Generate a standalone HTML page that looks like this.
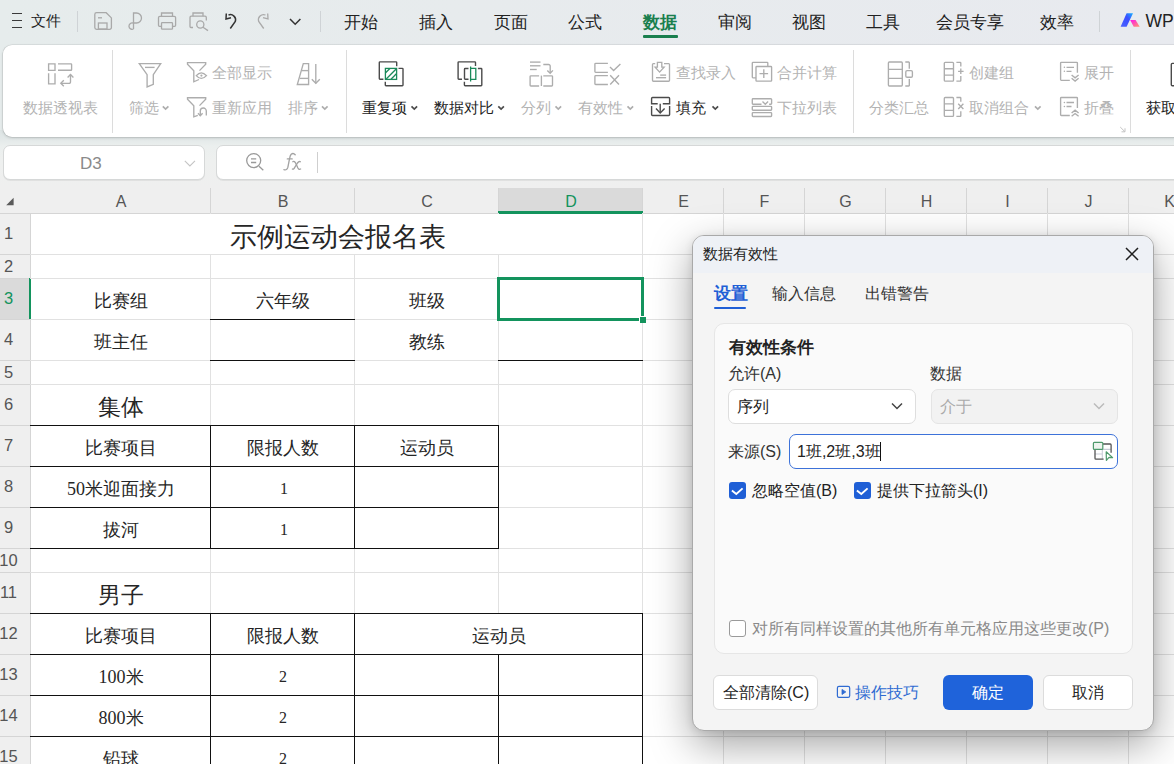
<!DOCTYPE html><html><head><meta charset="utf-8"><style>
*{box-sizing:border-box}
html,body{margin:0;padding:0}
body{width:1174px;height:764px;overflow:hidden;position:relative;background:#e7ebec;font-family:"Liberation Sans",sans-serif;color:#222}
.a{position:absolute}
.t{position:absolute;white-space:nowrap;line-height:1}
.ser{font-family:"Liberation Serif",serif;color:#262626}
svg{position:absolute;overflow:visible}
</style></head><body>
<div class="a" style="left:0;top:0;width:1174px;height:130px;background:linear-gradient(90deg,#e6ecec 0%,#e7ebed 40%,#e8eaef 100%)"></div>
<div class="a" style="left:0;top:130px;width:1174px;height:58px;background:linear-gradient(#dde4e4 0px,#e2e8e8 8px,#ebefee 16px,#eef0ef 30px,#efefef 58px)"></div>
<div class="a" style="left:12px;top:13px;width:10px;height:1.3px;background:#3a3a3a"></div>
<div class="a" style="left:12px;top:20px;width:10px;height:1.3px;background:#3a3a3a"></div>
<div class="a" style="left:12px;top:26.5px;width:10px;height:1.3px;background:#3a3a3a"></div>
<div class="t" style="left:31px;top:13px;font-size:15px;color:#222">文件</div>
<div class="a" style="left:77px;top:11px;width:1px;height:21px;background:#cfd3d6"></div>
<div class="a" style="left:320px;top:11px;width:1px;height:21px;background:#cfd3d6"></div>
<div class="a" style="left:1099px;top:11px;width:1px;height:21px;background:#cfd3d6"></div>
<div class="t" style="left:344px;top:14px;font-size:17px;color:#222;font-weight:normal">开始</div>
<div class="t" style="left:419px;top:14px;font-size:17px;color:#222;font-weight:normal">插入</div>
<div class="t" style="left:494px;top:14px;font-size:17px;color:#222;font-weight:normal">页面</div>
<div class="t" style="left:568px;top:14px;font-size:17px;color:#222;font-weight:normal">公式</div>
<div class="t" style="left:643px;top:14px;font-size:17px;color:#1a7f4e;font-weight:bold">数据</div>
<div class="t" style="left:718px;top:14px;font-size:17px;color:#222;font-weight:normal">审阅</div>
<div class="t" style="left:792px;top:14px;font-size:17px;color:#222;font-weight:normal">视图</div>
<div class="t" style="left:866px;top:14px;font-size:17px;color:#222;font-weight:normal">工具</div>
<div class="t" style="left:936px;top:14px;font-size:17px;color:#222;font-weight:normal">会员专享</div>
<div class="t" style="left:1040px;top:14px;font-size:17px;color:#222;font-weight:normal">效率</div>
<div class="a" style="left:643px;top:35px;width:35px;height:2.5px;background:#1a7f4e;border-radius:1px"></div>
<div class="t" style="left:1145.5px;top:13px;font-size:17.5px;color:#222;letter-spacing:0px">WPS</div>
<div class="a" style="left:3px;top:44.5px;width:1250px;height:92px;background:#fff;border-radius:9px;box-shadow:0 0 0 0.6px rgba(0,0,0,.10),0 1px 3px rgba(0,0,0,.16)"></div>
<div class="a" style="left:112px;top:50px;width:1px;height:83px;background:#dcdcdc"></div>
<div class="a" style="left:346px;top:50px;width:1px;height:83px;background:#dcdcdc"></div>
<div class="a" style="left:853px;top:50px;width:1px;height:83px;background:#dcdcdc"></div>
<div class="a" style="left:1130px;top:50px;width:1px;height:83px;background:#dcdcdc"></div>
<div class="t" style="left:23px;top:99.8px;font-size:15px;color:#b3b3b3">数据透视表</div>
<div class="t" style="left:129px;top:99.8px;font-size:15px;color:#b3b3b3">筛选</div>
<div class="t" style="left:212px;top:64.8px;font-size:15px;color:#b3b3b3">全部显示</div>
<div class="t" style="left:212px;top:99.8px;font-size:15px;color:#b3b3b3">重新应用</div>
<div class="t" style="left:288px;top:99.8px;font-size:15px;color:#b3b3b3">排序</div>
<div class="t" style="left:362px;top:99.8px;font-size:15px;color:#222">重复项</div>
<div class="t" style="left:434px;top:99.8px;font-size:15px;color:#222">数据对比</div>
<div class="t" style="left:521px;top:99.8px;font-size:15px;color:#b3b3b3">分列</div>
<div class="t" style="left:578px;top:99.8px;font-size:15px;color:#b3b3b3">有效性</div>
<div class="t" style="left:676px;top:64.8px;font-size:15px;color:#b3b3b3">查找录入</div>
<div class="t" style="left:676px;top:99.8px;font-size:15px;color:#222">填充</div>
<div class="t" style="left:777px;top:64.8px;font-size:15px;color:#b3b3b3">合并计算</div>
<div class="t" style="left:777px;top:99.8px;font-size:15px;color:#b3b3b3">下拉列表</div>
<div class="t" style="left:869px;top:99.8px;font-size:15px;color:#b3b3b3">分类汇总</div>
<div class="t" style="left:969px;top:64.8px;font-size:15px;color:#b3b3b3">创建组</div>
<div class="t" style="left:969px;top:99.8px;font-size:15px;color:#b3b3b3">取消组合</div>
<div class="t" style="left:1084px;top:64.8px;font-size:15px;color:#b3b3b3">展开</div>
<div class="t" style="left:1084px;top:99.8px;font-size:15px;color:#b3b3b3">折叠</div>
<div class="t" style="left:1146px;top:99.8px;font-size:15px;color:#222">获取</div>
<div class="a" style="left:3px;top:145px;width:202px;height:35px;background:#fff;border:1px solid #d6d8d8;border-radius:7px;box-shadow:0 1px 0 rgba(0,0,0,.06)"></div>
<div class="a" style="left:216px;top:145px;width:1000px;height:35px;background:#fff;border:1px solid #d6d8d8;border-radius:7px;box-shadow:0 1px 0 rgba(0,0,0,.06)"></div>
<div class="t" style="left:80px;top:155.2px;font-size:17px;color:#8a8a8a">D3</div>
<svg style="left:0;top:0" width="1174" height="764"><g fill="none" stroke="#a3a3a3" stroke-width="1.35" stroke-linecap="round"><path d="M295.2 154.8 Q293.3 152.6 291.2 154.3 Q290.1 155.4 289.6 158.5 L287.9 167.2 Q287 170.6 283.9 169.6"/><path d="M287.3 158.9 H292.2"/><path d="M292.9 161.7 Q294.6 160.8 295.6 163 L297.9 168 Q298.9 170 300.6 169"/><path d="M300.4 161.7 Q299 160.8 297.5 163 L294.6 167.6 Q293.6 169.8 292.4 169"/></g></svg>
<div class="a" style="left:317px;top:152px;width:1px;height:21px;background:#cfcfcf"></div>
<svg style="left:0;top:0" width="1174" height="764" viewBox="0 0 1174 764"><path d="M94.8 14.5 a1.8 1.8 0 0 1 1.8-1.8 h9.6 l5.2 5.2 v9.6 a1.8 1.8 0 0 1 -1.8 1.8 h-13 a1.8 1.8 0 0 1 -1.8-1.8z" fill="none" stroke="#a9a9a9" stroke-width="1.3"/><path d="M98 17.8h4" stroke="#a9a9a9" stroke-width="1.3"/><rect x="98.4" y="23" width="8.6" height="6" fill="none" stroke="#a9a9a9" stroke-width="1.3"/><path d="M133.5 29 V13 h3 a5 5 0 0 1 0 10 h-3.5 a3.2 3.2 0 1 0 0.5 6" fill="none" stroke="#a9a9a9" stroke-width="1.3"/><path d="M161.5 16.3 V13 h11 v3.3" fill="none" stroke="#a9a9a9" stroke-width="1.3"/><path d="M161.5 26.3 h-2 a1 1 0 0 1 -1-1 v-7.6 a1.4 1.4 0 0 1 1.4-1.4 h14.3 a1.4 1.4 0 0 1 1.4 1.4 v7.6 a1 1 0 0 1 -1 1 h-2" fill="none" stroke="#a9a9a9" stroke-width="1.3"/><rect x="161.5" y="22.6" width="11" height="6.6" rx="0.8" fill="none" stroke="#a9a9a9" stroke-width="1.3"/><path d="M193 16.3 V13 h10 v3.3" fill="none" stroke="#a9a9a9" stroke-width="1.3"/><path d="M193 27.5 h-2 a1 1 0 0 1 -1-1 v-9 a1.3 1.3 0 0 1 1.3-1.3 h13.7 a1.3 1.3 0 0 1 1.3 1.3 v3" fill="none" stroke="#a9a9a9" stroke-width="1.3"/><circle cx="200.3" cy="24.5" r="3.6" fill="none" stroke="#a9a9a9" stroke-width="1.3"/><path d="M203 27.2 l5 3.4" stroke="#a9a9a9" stroke-width="1.3"/><path d="M228.5 15 a5.2 5.2 0 0 1 6.8 6.5 l-5 7" fill="none" stroke="#333" stroke-width="1.5"/><path d="M226.3 13.5 l-0.3 5.5 l5 -1.3" fill="none" stroke="#333" stroke-width="1.5"/><path d="M265.5 15 a5.2 5.2 0 0 0 -6.8 6.5 l5 7" fill="none" stroke="#aaa" stroke-width="1.3"/><path d="M267.7 13.5 l0.3 5.5 l-5 -1.3" fill="none" stroke="#aaa" stroke-width="1.3"/><path d="M290 19 l5.2 5.3 l5.2 -5.3" fill="none" stroke="#333" stroke-width="1.5"/><defs><linearGradient id="gb" x1="0" y1="1" x2="1" y2="0"><stop offset="0" stop-color="#4a63ff"/><stop offset="0.6" stop-color="#3b4dff"/><stop offset="1" stop-color="#17b4ff"/></linearGradient><linearGradient id="gp" x1="0" y1="0" x2="1" y2="1"><stop offset="0" stop-color="#ff10f0"/><stop offset="1" stop-color="#ff9a6a"/></linearGradient></defs><path d="M1120.6 26.7 L1126.6 13.2 H1133 L1126.6 26.7Z" fill="url(#gb)"/><path d="M1130.2 19.9 H1135.6 L1139.7 26.7 H1133.7Z" fill="url(#gp)"/><g fill="none" stroke="#adadad" stroke-width="1.35"><path d="M48.6 63.9 h6.4 v6.4 h-6.4z"/><path d="M58 63.9 h13 a0.6 0.6 0 0 1 .6.6 v5.2 a0.6 0.6 0 0 1 -.6.6 h-13"/><path d="M48.6 73.3 v10.6 h6.4 v-10.6"/><path d="M61 83.3 h8.2 a1.3 1.3 0 0 0 1.3-1.3 v-7.5"/><path d="M63.8 80.3 l-3 3 l3 3"/><path d="M67.6 77.4 l2.9 -2.9 l2.9 2.9"/></g><g fill="none" stroke="#adadad" stroke-width="1.35"><path d="M139.3 63.6 h21.4 l-7.4 11 v9.8 l-6.2 2.5 v-12.3z"/><path d="M145 67.4 h9.6"/></g><g fill="none" stroke="#adadad" stroke-width="1.35"><path d="M199.5 70.6 l6.2 -6.3 v-1.6 h-18.2 v1.6 l6.3 6.5 v11 l5.2 -2.3"/><path d="M196.3 75.6 q4.9 -5.6 10.2 0 q-5.3 5.6 -10.2 0z"/></g><circle cx="201.4" cy="75.6" r="1.1" fill="#adadad"/><g fill="none" stroke="#adadad" stroke-width="1.35"><path d="M199.5 105.6 l6.2 -6.3 v-1.6 h-18.2 v1.6 l6.3 6.5 v11 l4 -1.5"/><path d="M206.3 115.5 v-4.5 a3 3 0 0 0 -6 0 v4.5"/><path d="M198 113.2 l2.3 2.5 l2.3 -2.5"/></g><g fill="none" stroke="#adadad" stroke-width="1.35"><path d="M303.3 63.6 h5.3 v20.9 h-11.3z"/><path d="M301.6 70.6 h7"/><path d="M299.8 78.4 h8.8"/><path d="M315.8 64 v19.5"/><path d="M311.8 79.3 l4 4 l4 -4"/></g><g fill="none" stroke="#4b4b4b" stroke-width="1.4"><path d="M383.4 79.3 h-3.4 a0.7 0.7 0 0 1 -.7-.7 v-16 a0.7 0.7 0 0 1 .7-.7 h16 a0.7 0.7 0 0 1 .7.7 v3.6"/><path d="M398.5 68.4 h3.8 a0.7 0.7 0 0 1 .7.7 v15.9 a0.7 0.7 0 0 1 -.7.7 h-16.3 a0.7 0.7 0 0 1 -.7-.7 v-3.3"/></g><g fill="none" stroke="#1a8a5a" stroke-width="1.3"><rect x="385.4" y="68.4" width="11.2" height="11"/><path d="M385.6 72.8 l4.3 -4.3"/><path d="M386.2 79 l10.2 -10.2"/><path d="M391 79.2 l5.4 -5.4"/></g><g fill="none" stroke="#4b4b4b" stroke-width="1.4"><path d="M462 79.3 h-3.2 a0.7 0.7 0 0 1 -.7-.7 v-16 a0.7 0.7 0 0 1 .7-.7 h16 a0.7 0.7 0 0 1 .7.7 v3.4"/><path d="M477.9 68.5 h3.2 a0.7 0.7 0 0 1 .7.7 v15.8 a0.7 0.7 0 0 1 -.7.7 h-16 a0.7 0.7 0 0 1 -.7-.7 v-3.3"/><path d="M468.5 68.5 h-3.3 a0.7 0.7 0 0 0 -.7.7 v9.4 a0.7 0.7 0 0 0 .7.7 h3.3"/></g><g fill="none" stroke="#1a8a5a" stroke-width="1.3"><path d="M470.6 66.5 v15"/><path d="M470.6 68.3 h5.2 v11.1 h-5.2"/></g><g fill="none" stroke="#adadad" stroke-width="1.35"><path d="M530 62.1 h10.5"/><path d="M530 65.8 h10.5"/><path d="M530 69.5 h6.7"/><path d="M543.3 64.5 h5.3 a1.6 1.6 0 0 1 1.6 1.6 v6.8"/><path d="M547.3 70.4 l2.9 2.9 l2.7 -2.9"/><path d="M539.1 75.8 h-8.2 a0.8 0.8 0 0 0 -.8.8 v8.6 a0.8 0.8 0 0 0 .8.8 h8.2"/><path d="M541.4 75.6 v10.4"/><path d="M543.3 75.8 h8.4 a0.8 0.8 0 0 1 .8.8 v8.6 a0.8 0.8 0 0 1 -.8.8 h-8.4"/></g><g fill="none" stroke="#adadad" stroke-width="1.35"><path d="M607.9 63.3 h-12.2 a0.8 0.8 0 0 0 -.8.8 v7.4 a0.8 0.8 0 0 0 .8.8 h12.2"/><path d="M607.9 75.6 h-12.2 a0.8 0.8 0 0 0 -.8.8 v7.3 a0.8 0.8 0 0 0 .8.8 h12.2"/><path d="M610 67.1 l3.6 3.5 l6.8 -6.6"/><path d="M610.2 75.3 l8.8 9.2 M619 75.3 l-8.8 9.2"/></g><g fill="none" stroke="#adadad" stroke-width="1.35"><path d="M655.2 63.6 h-1.8 a0.9 0.9 0 0 0 -.9.9 v15.8 a0.9 0.9 0 0 0 .9.9 h15.2 a0.9 0.9 0 0 0 .9-.9 v-15.8 a0.9 0.9 0 0 0 -.9-.9 h-4.6"/><path d="M657.4 62.3 v4.8 h-2.3 l4.5 5 l4.5 -5 h-2.3 v-4.8z"/><path d="M660.2 75.1 h5.9"/><path d="M656 77.7 h10.1"/></g><g fill="none" stroke="#4b4b4b" stroke-width="1.4"><path d="M651.6 106 v8.6 a0.9 0.9 0 0 0 .9.9 h16.2 a0.9 0.9 0 0 0 .9-.9 v-8.6"/><path d="M657.7 103.8 h-6.1 v-5.4 a0.9 0.9 0 0 1 .9-.9 h16.2 a0.9 0.9 0 0 1 .9.9 v5.4 h-6.8"/><path d="M660.2 103.8 v9.2"/><path d="M656 108.6 l4.2 4.4 l4.4 -4.4"/></g><g fill="none" stroke="#adadad" stroke-width="1.35"><path d="M756 77.8 h-3 a0.7 0.7 0 0 1 -.7-.7 v-14.1 a0.7 0.7 0 0 1 .7-.7 h14.1 a0.7 0.7 0 0 1 .7.7 v3.5"/><rect x="756" y="66.5" width="15.6" height="14.6" rx="0.7"/><path d="M763.8 69.3 v8.6 M759.5 73.6 h8.6"/></g><g fill="none" stroke="#adadad" stroke-width="1.35"><path d="M761.5 104.2 h-8.5 a0.7 0.7 0 0 1 -.7-.7 v-4.1 a0.7 0.7 0 0 1 .7-.7 h17.9 a0.7 0.7 0 0 1 .7.7 v4.1 a0.7 0.7 0 0 1 -.7.7 h-1.8"/><path d="M762.5 101.5 l2.8 2.7 l2.8 -2.7"/><rect x="752.3" y="106.3" width="19.3" height="3.9" rx="0.7"/><rect x="752.3" y="112.6" width="19.3" height="3.9" rx="0.7"/></g><g fill="none" stroke="#adadad" stroke-width="1.35"><rect x="888.4" y="62" width="13.9" height="24" rx="0.9"/><path d="M888.4 69.4 h13.9 M888.4 78.4 h13.9"/><path d="M905.3 62 h3.4 a0.6 0.6 0 0 1 .6.6 v6.1"/><path d="M909.3 79.1 v6.3 a0.6 0.6 0 0 1 -.6.6 h-3.4"/><rect x="905.8" y="70.6" width="6.6" height="6.6" rx="1.3"/></g><g fill="none" stroke="#adadad" stroke-width="1.35" transform="translate(0 0)"><rect x="944.3" y="62.3" width="9.2" height="18.8" rx="0.9"/><path d="M944.3 68.7 h9.2 M944.3 75.1 h9.2"/><path d="M956.4 62.3 h3.8 a0.6 0.6 0 0 1 .6.6 v3.6"/><path d="M960.8 76.1 v4.4 a0.6 0.6 0 0 1 -.6.6 h-3.8"/></g><g fill="none" stroke="#adadad" stroke-width="1.35" transform="translate(0 35.2)"><rect x="944.3" y="62.3" width="9.2" height="18.8" rx="0.9"/><path d="M944.3 68.7 h9.2 M944.3 75.1 h9.2"/><path d="M956.4 62.3 h3.8 a0.6 0.6 0 0 1 .6.6 v3.6"/><path d="M960.8 76.1 v4.4 a0.6 0.6 0 0 1 -.6.6 h-3.8"/></g><path d="M958.1 71.3 h5.5 M960.8 68.6 v5.4" fill="none" stroke="#adadad" stroke-width="1.35"/><path d="M958.2 103.7 l5.2 5.2 M963.4 103.7 l-5.2 5.2" fill="none" stroke="#adadad" stroke-width="1.35"/><g fill="none" stroke="#adadad" stroke-width="1.35" transform="translate(0 0)"><path d="M1069.8 80.3 h-8.5 a0.7 0.7 0 0 1 -.7-.7 v-16.6 a0.7 0.7 0 0 1 .7-.7 h15.4 a0.7 0.7 0 0 1 .7.7 v9.8"/><path d="M1066.5 67.3 h7.5 M1066.5 71.3 h5"/></g><g fill="#adadad" transform="translate(0 0)"><circle cx="1064.4" cy="67.3" r="0.8"/><circle cx="1064.4" cy="71.3" r="0.8"/></g><path d="M1071.6 75 l3.5 2.8 l3.5 -2.8 M1071.6 78.3 l3.5 2.8 l3.5 -2.8" fill="none" stroke="#adadad" stroke-width="1.35"/><g fill="none" stroke="#adadad" stroke-width="1.35" transform="translate(0 35.2)"><path d="M1069.8 80.3 h-8.5 a0.7 0.7 0 0 1 -.7-.7 v-16.6 a0.7 0.7 0 0 1 .7-.7 h15.4 a0.7 0.7 0 0 1 .7.7 v9.8"/><path d="M1066.5 67.3 h7.5 M1066.5 71.3 h5"/></g><g fill="#adadad" transform="translate(0 35.2)"><circle cx="1064.4" cy="67.3" r="0.8"/><circle cx="1064.4" cy="71.3" r="0.8"/></g><path d="M1071.6 113 l3.5 -2.8 l3.5 2.8 M1071.6 116.3 l3.5 -2.8 l3.5 2.8" fill="none" stroke="#adadad" stroke-width="1.35"/><path d="M1120.2 127 l4.8 4.8 M1121.5 131.8 h3.5 v-3.5" fill="none" stroke="#c4c4c4" stroke-width="1"/><rect x="1171.3" y="63.4" width="14" height="22.3" rx="1" fill="none" stroke="#4b4b4b" stroke-width="1.4"/><path d="M162.8 106.3 l2.8 2.7 l2.8 -2.7" fill="none" stroke="#adadad" stroke-width="1.7"/><path d="M322 106.3 l2.8 2.7 l2.8 -2.7" fill="none" stroke="#adadad" stroke-width="1.7"/><path d="M411.5 106.3 l2.8 2.7 l2.8 -2.7" fill="none" stroke="#4b4b4b" stroke-width="1.7"/><path d="M498.3 106.3 l2.8 2.7 l2.8 -2.7" fill="none" stroke="#4b4b4b" stroke-width="1.7"/><path d="M555.5 106.3 l2.8 2.7 l2.8 -2.7" fill="none" stroke="#adadad" stroke-width="1.7"/><path d="M627.5 106.3 l2.8 2.7 l2.8 -2.7" fill="none" stroke="#adadad" stroke-width="1.7"/><path d="M712.5 106.3 l2.8 2.7 l2.8 -2.7" fill="none" stroke="#4b4b4b" stroke-width="1.7"/><path d="M1035 106.3 l2.8 2.7 l2.8 -2.7" fill="none" stroke="#adadad" stroke-width="1.7"/><g fill="none" stroke="#9a9a9a" stroke-width="1.3"><circle cx="253.7" cy="160.6" r="7"/><path d="M251 158.9 h5.2 M251 162.5 h5.2"/><path d="M259 166.2 l4.3 4"/></g><path d="M184.8 160.9 l5.1 5.1 l5.1 -5.1" fill="none" stroke="#c4c4c4" stroke-width="1.1"/></svg>
<div class="a" style="left:0;top:188px;width:1174px;height:25px;background:#efefef"></div>
<div class="a" style="left:0;top:213px;width:30px;height:551px;background:#efefef"></div>
<div class="a" style="left:498px;top:188px;width:144px;height:25px;background:#dadada"></div>
<div class="a" style="left:0;top:278px;width:30px;height:41px;background:#dadada"></div>
<div class="a" style="left:30px;top:213px;width:1144px;height:551px;background:#fff"></div>
<svg style="left:0;top:0" width="40" height="220"><path d="M13.6 197.8 V205.2 H6.2Z" fill="#5a5a5a"/></svg>
<div class="a" style="left:210px;top:188px;width:1px;height:25px;background:#d5d5d5"></div>
<div class="a" style="left:354px;top:188px;width:1px;height:25px;background:#d5d5d5"></div>
<div class="a" style="left:498px;top:188px;width:1px;height:25px;background:#d5d5d5"></div>
<div class="a" style="left:642px;top:188px;width:1px;height:25px;background:#d5d5d5"></div>
<div class="a" style="left:723px;top:188px;width:1px;height:25px;background:#d5d5d5"></div>
<div class="a" style="left:804px;top:188px;width:1px;height:25px;background:#d5d5d5"></div>
<div class="a" style="left:885px;top:188px;width:1px;height:25px;background:#d5d5d5"></div>
<div class="a" style="left:966px;top:188px;width:1px;height:25px;background:#d5d5d5"></div>
<div class="a" style="left:1047px;top:188px;width:1px;height:25px;background:#d5d5d5"></div>
<div class="a" style="left:1128px;top:188px;width:1px;height:25px;background:#d5d5d5"></div>
<div class="a" style="left:1209px;top:188px;width:1px;height:25px;background:#d5d5d5"></div>
<div class="a" style="left:0;top:213px;width:1174px;height:1px;background:#d5d5d5"></div>
<div class="a" style="left:30px;top:213px;width:1px;height:551px;background:#d5d5d5"></div>
<div class="t" style="left:101.0px;width:40px;text-align:center;top:194px;font-size:16px;color:#555">A</div>
<div class="t" style="left:263.0px;width:40px;text-align:center;top:194px;font-size:16px;color:#555">B</div>
<div class="t" style="left:407.0px;width:40px;text-align:center;top:194px;font-size:16px;color:#555">C</div>
<div class="t" style="left:551.0px;width:40px;text-align:center;top:194px;font-size:16px;color:#13935d">D</div>
<div class="t" style="left:663.5px;width:40px;text-align:center;top:194px;font-size:16px;color:#555">E</div>
<div class="t" style="left:744.5px;width:40px;text-align:center;top:194px;font-size:16px;color:#555">F</div>
<div class="t" style="left:825.5px;width:40px;text-align:center;top:194px;font-size:16px;color:#555">G</div>
<div class="t" style="left:906.5px;width:40px;text-align:center;top:194px;font-size:16px;color:#555">H</div>
<div class="t" style="left:987.5px;width:40px;text-align:center;top:194px;font-size:16px;color:#555">I</div>
<div class="t" style="left:1068.5px;width:40px;text-align:center;top:194px;font-size:16px;color:#555">J</div>
<div class="t" style="left:1149.5px;width:40px;text-align:center;top:194px;font-size:16px;color:#555">K</div>
<div class="t" style="left:-1.5px;width:20px;text-align:center;top:225.0px;font-size:16.5px;color:#555">1</div>
<div class="a" style="left:0;top:254px;width:30px;height:1px;background:#d5d5d5"></div>
<div class="t" style="left:-1.5px;width:20px;text-align:center;top:257.5px;font-size:16.5px;color:#555">2</div>
<div class="a" style="left:0;top:278px;width:30px;height:1px;background:#d5d5d5"></div>
<div class="t" style="left:-1.5px;width:20px;text-align:center;top:290.0px;font-size:16.5px;color:#13935d">3</div>
<div class="a" style="left:0;top:319px;width:30px;height:1px;background:#d5d5d5"></div>
<div class="t" style="left:-1.5px;width:20px;text-align:center;top:331.0px;font-size:16.5px;color:#555">4</div>
<div class="a" style="left:0;top:360px;width:30px;height:1px;background:#d5d5d5"></div>
<div class="t" style="left:-1.5px;width:20px;text-align:center;top:363.5px;font-size:16.5px;color:#555">5</div>
<div class="a" style="left:0;top:384px;width:30px;height:1px;background:#d5d5d5"></div>
<div class="t" style="left:-1.5px;width:20px;text-align:center;top:396.0px;font-size:16.5px;color:#555">6</div>
<div class="a" style="left:0;top:425px;width:30px;height:1px;background:#d5d5d5"></div>
<div class="t" style="left:-1.5px;width:20px;text-align:center;top:437.0px;font-size:16.5px;color:#555">7</div>
<div class="a" style="left:0;top:466px;width:30px;height:1px;background:#d5d5d5"></div>
<div class="t" style="left:-1.5px;width:20px;text-align:center;top:478.0px;font-size:16.5px;color:#555">8</div>
<div class="a" style="left:0;top:507px;width:30px;height:1px;background:#d5d5d5"></div>
<div class="t" style="left:-1.5px;width:20px;text-align:center;top:519.0px;font-size:16.5px;color:#555">9</div>
<div class="a" style="left:0;top:548px;width:30px;height:1px;background:#d5d5d5"></div>
<div class="t" style="left:-1.5px;width:20px;text-align:center;top:551.5px;font-size:16.5px;color:#555">10</div>
<div class="a" style="left:0;top:572px;width:30px;height:1px;background:#d5d5d5"></div>
<div class="t" style="left:-1.5px;width:20px;text-align:center;top:584.0px;font-size:16.5px;color:#555">11</div>
<div class="a" style="left:0;top:613px;width:30px;height:1px;background:#d5d5d5"></div>
<div class="t" style="left:-1.5px;width:20px;text-align:center;top:625.0px;font-size:16.5px;color:#555">12</div>
<div class="a" style="left:0;top:654px;width:30px;height:1px;background:#d5d5d5"></div>
<div class="t" style="left:-1.5px;width:20px;text-align:center;top:666.0px;font-size:16.5px;color:#555">13</div>
<div class="a" style="left:0;top:695px;width:30px;height:1px;background:#d5d5d5"></div>
<div class="t" style="left:-1.5px;width:20px;text-align:center;top:707.0px;font-size:16.5px;color:#555">14</div>
<div class="a" style="left:0;top:736px;width:30px;height:1px;background:#d5d5d5"></div>
<div class="t" style="left:-1.5px;width:20px;text-align:center;top:748.0px;font-size:16.5px;color:#555">15</div>
<div class="a" style="left:0;top:777px;width:30px;height:1px;background:#d5d5d5"></div>
<div class="a" style="left:498px;top:211.3px;width:145px;height:2.7px;background:#13935d"></div>
<div class="a" style="left:28.8px;top:278px;width:2.4px;height:41px;background:#13935d"></div>
<div class="a" style="left:30px;top:254px;width:1144px;height:1px;background:#e1e1e1"></div>
<div class="a" style="left:30px;top:278px;width:1144px;height:1px;background:#e1e1e1"></div>
<div class="a" style="left:30px;top:319px;width:1144px;height:1px;background:#e1e1e1"></div>
<div class="a" style="left:30px;top:360px;width:1144px;height:1px;background:#e1e1e1"></div>
<div class="a" style="left:30px;top:384px;width:1144px;height:1px;background:#e1e1e1"></div>
<div class="a" style="left:30px;top:425px;width:1144px;height:1px;background:#e1e1e1"></div>
<div class="a" style="left:30px;top:466px;width:1144px;height:1px;background:#e1e1e1"></div>
<div class="a" style="left:30px;top:507px;width:1144px;height:1px;background:#e1e1e1"></div>
<div class="a" style="left:30px;top:548px;width:1144px;height:1px;background:#e1e1e1"></div>
<div class="a" style="left:30px;top:572px;width:1144px;height:1px;background:#e1e1e1"></div>
<div class="a" style="left:30px;top:613px;width:1144px;height:1px;background:#e1e1e1"></div>
<div class="a" style="left:30px;top:654px;width:1144px;height:1px;background:#e1e1e1"></div>
<div class="a" style="left:30px;top:695px;width:1144px;height:1px;background:#e1e1e1"></div>
<div class="a" style="left:30px;top:736px;width:1144px;height:1px;background:#e1e1e1"></div>
<div class="a" style="left:30px;top:777px;width:1144px;height:1px;background:#e1e1e1"></div>
<div class="a" style="left:210px;top:213px;width:1px;height:551px;background:#e1e1e1"></div>
<div class="a" style="left:354px;top:213px;width:1px;height:551px;background:#e1e1e1"></div>
<div class="a" style="left:498px;top:213px;width:1px;height:551px;background:#e1e1e1"></div>
<div class="a" style="left:642px;top:213px;width:1px;height:551px;background:#e1e1e1"></div>
<div class="a" style="left:723px;top:213px;width:1px;height:551px;background:#e1e1e1"></div>
<div class="a" style="left:804px;top:213px;width:1px;height:551px;background:#e1e1e1"></div>
<div class="a" style="left:885px;top:213px;width:1px;height:551px;background:#e1e1e1"></div>
<div class="a" style="left:966px;top:213px;width:1px;height:551px;background:#e1e1e1"></div>
<div class="a" style="left:1047px;top:213px;width:1px;height:551px;background:#e1e1e1"></div>
<div class="a" style="left:1128px;top:213px;width:1px;height:551px;background:#e1e1e1"></div>
<div class="a" style="left:1209px;top:213px;width:1px;height:551px;background:#e1e1e1"></div>
<div class="a" style="left:31px;top:214px;width:611px;height:40px;background:#fff"></div>
<div class="t ser" style="left:31.5px;width:612px;text-align:center;top:224px;font-size:27px">示例运动会报名表</div>
<div class="t ser" style="left:31px;width:180px;text-align:center;top:291.8px;font-size:18px">比赛组</div>
<div class="t ser" style="left:211px;width:144px;text-align:center;top:291.8px;font-size:18px">六年级</div>
<div class="t ser" style="left:355px;width:144px;text-align:center;top:291.8px;font-size:18px">班级</div>
<div class="t ser" style="left:31px;width:180px;text-align:center;top:332.8px;font-size:18px">班主任</div>
<div class="t ser" style="left:355px;width:144px;text-align:center;top:332.8px;font-size:18px">教练</div>
<div class="t ser" style="left:31px;width:180px;text-align:center;top:395.5px;font-size:23px">集体</div>
<div class="t ser" style="left:31px;width:180px;text-align:center;top:438.8px;font-size:18px">比赛项目</div>
<div class="t ser" style="left:211px;width:144px;text-align:center;top:438.8px;font-size:18px">限报人数</div>
<div class="t ser" style="left:355px;width:144px;text-align:center;top:438.8px;font-size:18px">运动员</div>
<div class="t ser" style="left:31px;width:180px;text-align:center;top:479.8px;font-size:18px">50米迎面接力</div>
<div class="t ser" style="left:212px;width:144px;text-align:center;top:481.0px;font-size:16px">1</div>
<div class="t ser" style="left:31px;width:180px;text-align:center;top:520.8px;font-size:18px">拔河</div>
<div class="t ser" style="left:212px;width:144px;text-align:center;top:522.0px;font-size:16px">1</div>
<div class="t ser" style="left:31px;width:180px;text-align:center;top:583.5px;font-size:23px">男子</div>
<div class="t ser" style="left:31px;width:180px;text-align:center;top:626.8px;font-size:18px">比赛项目</div>
<div class="t ser" style="left:211px;width:144px;text-align:center;top:626.8px;font-size:18px">限报人数</div>
<div class="a" style="left:355px;top:614px;width:287px;height:40px;background:#fff"></div>
<div class="t ser" style="left:355px;width:288px;text-align:center;top:626.8px;font-size:18px">运动员</div>
<div class="t ser" style="left:31px;width:180px;text-align:center;top:667.8px;font-size:18px">100米</div>
<div class="t ser" style="left:211px;width:144px;text-align:center;top:669.0px;font-size:16px">2</div>
<div class="t ser" style="left:31px;width:180px;text-align:center;top:708.8px;font-size:18px">800米</div>
<div class="t ser" style="left:211px;width:144px;text-align:center;top:710.0px;font-size:16px">2</div>
<div class="t ser" style="left:31px;width:180px;text-align:center;top:749.8px;font-size:18px">铅球</div>
<div class="t ser" style="left:211px;width:144px;text-align:center;top:751.0px;font-size:16px">2</div>
<div class="a" style="left:210px;top:318.7px;width:145px;height:1.3px;background:#111"></div>
<div class="a" style="left:210px;top:359.7px;width:145px;height:1.3px;background:#111"></div>
<div class="a" style="left:498px;top:359.7px;width:145px;height:1.3px;background:#111"></div>
<div class="a" style="left:30px;top:424.7px;width:469px;height:1.3px;background:#111"></div>
<div class="a" style="left:30px;top:465.7px;width:469px;height:1.3px;background:#111"></div>
<div class="a" style="left:30px;top:506.7px;width:469px;height:1.3px;background:#111"></div>
<div class="a" style="left:30px;top:547.7px;width:469px;height:1.3px;background:#111"></div>
<div class="a" style="left:209.7px;top:425px;width:1.3px;height:124px;background:#111"></div>
<div class="a" style="left:353.7px;top:425px;width:1.3px;height:124px;background:#111"></div>
<div class="a" style="left:497.7px;top:425px;width:1.3px;height:124px;background:#111"></div>
<div class="a" style="left:30px;top:612.7px;width:613px;height:1.3px;background:#111"></div>
<div class="a" style="left:30px;top:653.7px;width:613px;height:1.3px;background:#111"></div>
<div class="a" style="left:30px;top:694.7px;width:613px;height:1.3px;background:#111"></div>
<div class="a" style="left:30px;top:735.7px;width:613px;height:1.3px;background:#111"></div>
<div class="a" style="left:209.7px;top:613px;width:1.3px;height:152px;background:#111"></div>
<div class="a" style="left:353.7px;top:613px;width:1.3px;height:152px;background:#111"></div>
<div class="a" style="left:641.7px;top:613px;width:1.3px;height:152px;background:#111"></div>
<div class="a" style="left:497.7px;top:654px;width:1.3px;height:111px;background:#111"></div>
<div class="a" style="left:497px;top:277px;width:147px;height:44px;border:3px solid #13935d"></div>
<div class="a" style="left:638.5px;top:315.5px;width:7.5px;height:7.5px;background:#13935d;border:1.2px solid #fff;border-right:0;border-bottom:0"></div>
<div class="a" style="left:692px;top:235px;width:461.5px;height:495.5px;background:#f4f4f4;border:1px solid #a9a9a9;border-radius:12px;box-shadow:0 14px 42px rgba(0,0,0,.36),0 2px 8px rgba(0,0,0,.10);overflow:hidden"><div class="a" style="left:0;top:0;width:100%;height:37px;background:#eef1f6"></div></div>
<div class="t" style="left:703px;top:246px;font-size:15px;color:#222">数据有效性</div>
<svg style="left:1125px;top:247px" width="14" height="14" viewBox="0 0 14 14"><path d="M1 1L13 13M13 1L1 13" stroke="#1e1e1e" stroke-width="1.45"/></svg>
<div class="t" style="left:713.5px;top:285.5px;font-size:16.8px;color:#1f5fd6;font-weight:bold">设置</div>
<div class="a" style="left:714px;top:306.5px;width:32px;height:2.5px;background:#1f5fd6;border-radius:1px"></div>
<div class="t" style="left:772px;top:286px;font-size:16px;color:#333">输入信息</div>
<div class="t" style="left:865px;top:286px;font-size:16px;color:#333">出错警告</div>
<div class="a" style="left:713.5px;top:322.5px;width:419px;height:331px;background:#fafafa;border:1px solid #e6e6e6;border-radius:10px"></div>
<div class="t" style="left:728.5px;top:339.5px;font-size:16.6px;color:#222;font-weight:bold">有效性条件</div>
<div class="t" style="left:728px;top:366px;font-size:16px;color:#333">允许(A)</div>
<div class="t" style="left:930px;top:366px;font-size:16px;color:#333">数据</div>
<div class="a" style="left:728px;top:389px;width:188px;height:35px;background:#fff;border:1px solid #dedede;border-radius:7px"></div>
<div class="t" style="left:737px;top:399px;font-size:16px;color:#222">序列</div>
<svg style="left:891px;top:402px" width="12" height="8" viewBox="0 0 12 8"><path d="M1 1.5L6 6.5L11 1.5" fill="none" stroke="#444" stroke-width="1.5"/></svg>
<div class="a" style="left:931px;top:389px;width:187px;height:35px;background:#f2f2f2;border:1px solid #e4e4e4;border-radius:7px"></div>
<div class="t" style="left:940px;top:399px;font-size:16px;color:#aaa">介于</div>
<svg style="left:1093px;top:402px" width="12" height="8" viewBox="0 0 12 8"><path d="M1 1.5L6 6.5L11 1.5" fill="none" stroke="#bbb" stroke-width="1.5"/></svg>
<div class="t" style="left:728px;top:444px;font-size:16px;color:#333">来源(S)</div>
<div class="a" style="left:789px;top:434px;width:329px;height:34.5px;background:#fff;border:1.5px solid #3d72d9;border-radius:7px"></div>
<div class="t" style="left:797px;top:444px;font-size:16px;color:#222">1班,2班,3班</div>
<svg style="left:0;top:0" width="1174" height="764"><path d="M1102.8 449.4 H1111 M1095 454 H1102.8 M1102.3 449.4 V459" stroke="#c9cdd8" stroke-width="1.1" fill="none"/><path d="M1102.8 444 H1110.2 a0.9 0.9 0 0 1 .9.9 V452.8 M1095 449.4 V458.3 a0.9 0.9 0 0 0 .9.9 H1103.6" stroke="#555" stroke-width="1.3" fill="none"/><rect x="1093.4" y="442.4" width="9.4" height="7" rx="0.9" fill="#eef4ef" stroke="#4e9a6c" stroke-width="1.2"/><path d="M1106.2 451.8 L1112.6 457.6 L1109 457.4 L1106.4 460.4Z" fill="#fff" stroke="#4e9a6c" stroke-width="1.2" stroke-linejoin="round"/><rect x="837.4" y="686.3" width="12.3" height="11" rx="1.6" fill="none" stroke="#2f6bd2" stroke-width="1.2"/><path d="M842 689.4 L845.8 691.9 L842 694.5Z" fill="#2f6bd2" stroke="#2f6bd2" stroke-width="0.8" stroke-linejoin="round"/></svg>
<div class="a" style="left:880px;top:442px;width:1px;height:19px;background:#111"></div>
<div class="a" style="left:729px;top:482px;width:17px;height:17px;background:#1f5fd6;border-radius:3px"></div>
<svg style="left:729px;top:482px" width="17" height="17" viewBox="0 0 17 17"><path d="M2.9 8.6L7.3 12L13.6 6.4" fill="none" stroke="#fff" stroke-width="1.9"/></svg>
<div class="a" style="left:854px;top:482px;width:17px;height:17px;background:#1f5fd6;border-radius:3px"></div>
<svg style="left:854px;top:482px" width="17" height="17" viewBox="0 0 17 17"><path d="M2.9 8.6L7.3 12L13.6 6.4" fill="none" stroke="#fff" stroke-width="1.9"/></svg>
<div class="t" style="left:752px;top:483px;font-size:16px;color:#222">忽略空值(B)</div>
<div class="t" style="left:877px;top:483px;font-size:16px;color:#222">提供下拉箭头(I)</div>
<div class="a" style="left:729px;top:620px;width:17px;height:17px;background:#fff;border:1.3px solid #9a9a9a;border-radius:3px"></div>
<div class="t" style="left:752px;top:621px;font-size:16px;color:#8a8a8a">对所有同样设置的其他所有单元格应用这些更改(P)</div>
<div class="a" style="left:712.5px;top:674.5px;width:105px;height:35px;background:#fff;border:1px solid #dcdcdc;border-radius:6px"></div>
<div class="t" style="left:723px;top:685px;font-size:16px;color:#222">全部清除(C)</div>
<div class="t" style="left:855px;top:685px;font-size:16px;color:#2f6bd2">操作技巧</div>
<div class="a" style="left:942.5px;top:674.5px;width:90.5px;height:35px;background:#1f63da;border-radius:6px"></div>
<div class="t" style="left:972px;top:685px;font-size:16px;color:#fff">确定</div>
<div class="a" style="left:1043px;top:674.5px;width:89.5px;height:35px;background:#fff;border:1px solid #dcdcdc;border-radius:6px"></div>
<div class="t" style="left:1072px;top:685px;font-size:16px;color:#222">取消</div>
</body></html>
